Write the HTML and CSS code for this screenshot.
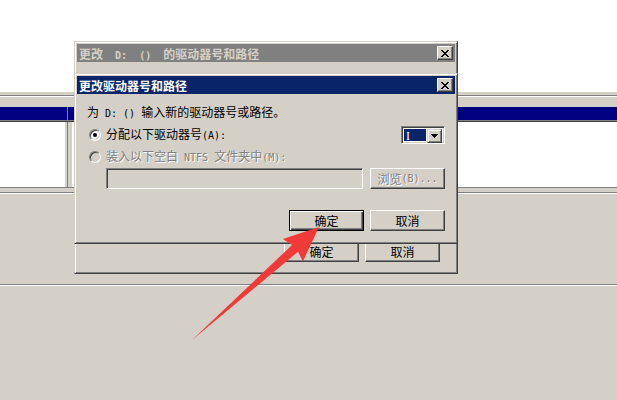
FILE: index.html
```html
<!DOCTYPE html>
<html lang="zh-CN">
<head>
    <meta charset="UTF-8">
    <meta name="viewport" content="width=device-width, initial-scale=1.0">
    <title>更改驱动器号和路径</title>
    <link rel="stylesheet" href="styles.css">
</head>
<body>

    <div class="screen">
        <!-- console window behind the dialogs -->
        <div class="blank"></div>
        <div class="console">
            <div class="toolbar"><div class="toolbar-rule"></div></div>
            <div class="column-head">
                <div class="head-left"></div>
                <div class="head-split"></div>
                <div class="head-right"></div>
            </div>
            <div class="panes">
                <div class="pane pane-left"></div>
                <div class="splitter"></div>
                <div class="pane pane-right"></div>
            </div>
            <div class="pane-foot"></div>
        </div>
        <div class="status-area"></div>
        <div class="status-bar"></div>

        <!-- first dialog (inactive) -->
        <div class="window win-back">
            <div class="titlebar inactive">
                <span class="title">更改<span class="hw">  D:  ()  </span>的驱动器号和路径</span>
                <span class="close-btn">
                    <svg width="8" height="7" viewBox="0 0 8 7"><path d="M0 0h2v1H0zM6 0h2v1H6zM1 1h2v1H1zM5 1h2v1H5zM2 2h4v1H2zM3 3h2v1H3zM2 4h4v1H2zM1 5h2v1H1zM5 5h2v1H5zM0 6h2v1H0zM6 6h2v1H6z" fill="#000" shape-rendering="crispEdges"/></svg>
                </span>
            </div>
            <div class="client back-client">
                <div class="actions back-actions">
                    <button class="btn">确定</button>
                    <button class="btn">取消</button>
                </div>
            </div>
        </div>

        <!-- second dialog (active) -->
        <div class="window win-front">
            <div class="titlebar">
                <span class="title">更改驱动器号和路径</span>
                <span class="close-btn">
                    <svg width="8" height="7" viewBox="0 0 8 7"><path d="M0 0h2v1H0zM6 0h2v1H6zM1 1h2v1H1zM5 1h2v1H5zM2 2h4v1H2zM3 3h2v1H3zM2 4h4v1H2zM1 5h2v1H1zM5 5h2v1H5zM0 6h2v1H0zM6 6h2v1H6z" fill="#000" shape-rendering="crispEdges"/></svg>
                </span>
            </div>
            <div class="client front-client">
                <div class="prompt">为<span class="hw"> D: () </span>输入新的驱动器号或路径。</div>

                <div class="option">
                    <span class="radio checked"></span>
                    <span class="option-label">分配以下驱动器号<span class="hw">(A):</span></span>
                    <div class="combo">
                        <span class="combo-value">I</span>
                        <span class="combo-btn">
                            <svg width="7" height="4" viewBox="0 0 7 4"><path d="M0 0h7v1H0zM1 1h5v1H1zM2 2h3v1H2zM3 3h1v1H3z" fill="#000" shape-rendering="crispEdges"/></svg>
                        </span>
                    </div>
                </div>

                <div class="option option-mount">
                    <span class="radio disabled"></span>
                    <span class="option-label disabled-text">装入以下空白<span class="hw"> NTFS </span>文件夹中<span class="hw">(M):</span></span>
                </div>

                <div class="path-row">
                    <div class="path-input"></div>
                    <button class="btn disabled-text">浏览<span class="hw">(B)...</span></button>
                </div>

                <div class="actions">
                    <button class="btn default">确定</button>
                    <button class="btn">取消</button>
                </div>
            </div>
        </div>

        <!-- red callout arrow -->
        <svg class="callout" width="617" height="400" viewBox="0 0 617 400">
            <polygon points="319,227 302.9,261.5 298.1,251.7 192,340 292.1,244.9 282.9,239.1" fill="#f03a3a"/>
        </svg>
    </div>

</body>
</html>
```

FILE: styles.css
```css
body {
    margin: 0;
    font-family: "Noto Sans CJK SC", "Noto Sans", sans-serif;
    font-size: 12px;
    color: #000;
    background-color: #d4d0c8;
}

.screen {
    position: relative;
    width: 617px;
    height: 400px;
    overflow: hidden;
    display: flex;
    flex-direction: column;
}

/* half-width latin runs, 6px per character like the bitmap UI font */
.hw {
    font-family: "DejaVu Sans Mono", monospace;
    font-size: 10px;
    white-space: pre;
}

/* --- background console --- */
.blank {
    height: 91px;
    background-color: #fff;
}

.toolbar {
    height: 15px;
    border-top: 1px solid #fff;
    background-color: #d4d0c8;
}

.toolbar-rule {
    margin-top: 3px;
    border-top: 1px solid #808080;
    border-bottom: 1px solid #fff;
}

.column-head {
    display: flex;
    height: 13px;
    background-color: #000080;
    border-bottom: 1px solid #808080;
    box-shadow: 0 1px 0 #404040;
}

.head-left {
    width: 67px;
}

.head-split {
    width: 1px;
    background-color: #808080;
}

.head-right {
    flex-grow: 1;
}

.panes {
    display: flex;
    height: 65px;
    margin-top: 1px;
}

.pane {
    background-color: #fff;
}

.pane-left {
    width: 65px;
}

.splitter {
    width: 6px;
    border-left: 2px solid #d4d0c8;
    box-shadow: inset 1px 0 #808080, inset -1px 0 #fff;
    background-color: #d4d0c8;
}

.pane-right {
    flex-grow: 1;
}

.pane-foot {
    height: 4px;
    border-top: 1px solid #808080;
    border-bottom: 1px solid #808080;
    box-shadow: 0 1px 0 #fff;
}

.status-area {
    height: 91px;
}

.status-bar {
    flex-grow: 1;
    border-top: 1px solid #808080;
    box-shadow: inset 0 1px 0 #fff;
}

/* --- dialog windows --- */
.window {
    position: absolute;
    box-sizing: border-box;
    display: flex;
    flex-direction: column;
    padding: 2px;
    background-color: #d4d0c8;
    border: 1px solid;
    border-color: #d4d0c8 #404040 #404040 #d4d0c8;
    box-shadow: inset 1px 1px #fff, inset -1px -1px #808080;
}

.win-back {
    left: 74px;
    top: 41px;
    width: 384px;
    height: 233px;
}

.win-front {
    left: 74px;
    top: 73px;
    width: 384px;
    height: 171px;
}

.titlebar {
    display: flex;
    align-items: center;
    height: 18px;
    padding: 0 2px 0 2px;
    background-color: #0a246a;
    color: #fff;
    font-weight: bold;
    white-space: nowrap;
}

.titlebar.inactive {
    background-color: #808080;
    color: #d4d0c8;
}

.titlebar .hw {
    font-weight: bold;
}

.close-btn {
    margin-left: auto;
    box-sizing: border-box;
    width: 16px;
    height: 14px;
    display: flex;
    align-items: center;
    justify-content: center;
    background-color: #d4d0c8;
    border: 1px solid;
    border-color: #fff #404040 #404040 #fff;
    box-shadow: inset -1px -1px #808080;
}

.client {
    flex-grow: 1;
    display: flex;
    flex-direction: column;
}

.back-client {
    justify-content: flex-end;
    padding: 0 15px 9px 0;
}

.back-actions {
    gap: 12px;
}

.front-client {
    padding: 12px 10px 0 10px;
}

.prompt {
    line-height: 12px;
    white-space: nowrap;
}

.option {
    display: flex;
    align-items: center;
    height: 18px;
    margin-top: 6px;
    padding-left: 2px;
    white-space: nowrap;
}

.option-mount {
    height: 14px;
}

.option-label {
    margin-left: 5px;
    line-height: 12px;
}

.disabled-text,
.btn.disabled-text {
    color: #808080;
    text-shadow: 1px 1px 0 #fff;
}

.radio {
    box-sizing: border-box;
    width: 12px;
    height: 12px;
    border-radius: 50%;
    border: 1px solid;
    border-color: #808080 #fff #fff #808080;
    box-shadow: inset 1px 1px #404040, inset -1px -1px #d4d0c8;
    background-color: #fff;
    display: flex;
    align-items: center;
    justify-content: center;
}

.radio.checked::after {
    content: "";
    width: 4px;
    height: 4px;
    border-radius: 50%;
    background-color: #000;
}

.radio.disabled {
    background-color: #d4d0c8;
}

.combo {
    margin-left: auto;
    box-sizing: border-box;
    width: 44px;
    height: 18px;
    padding: 2px;
    display: flex;
    gap: 1px;
    background-color: #fff;
    border: 1px solid;
    border-color: #808080 #fff #fff #808080;
    box-shadow: inset 1px 1px #404040, inset -1px -1px #d4d0c8;
}

.combo-value {
    width: 23px;
    padding-left: 2px;
    box-sizing: border-box;
    background-color: #0a246a;
    color: #fff;
    font-family: "Liberation Serif", serif;
    line-height: 14px;
}

.combo-btn {
    box-sizing: border-box;
    width: 16px;
    height: 14px;
    display: flex;
    align-items: center;
    justify-content: center;
    background-color: #d4d0c8;
    border: 1px solid;
    border-color: #d4d0c8 #404040 #404040 #d4d0c8;
    box-shadow: inset 1px 1px #fff, inset -1px -1px #808080;
}

.path-row {
    display: flex;
    gap: 7px;
    height: 21px;
    margin-top: 4px;
    margin-left: 19px;
}

.path-input {
    flex-grow: 1;
    box-sizing: border-box;
    border: 1px solid;
    border-color: #808080 #fff #fff #808080;
    box-shadow: inset 1px 1px #404040, inset -1px -1px #d4d0c8;
    background-color: #d4d0c8;
}

.actions {
    display: flex;
    justify-content: flex-end;
    gap: 6px;
    margin-top: 21px;
}

.btn {
    box-sizing: border-box;
    width: 75px;
    height: 21px;
    padding: 0;
    font: inherit;
    color: #000;
    line-height: 12px;
    background-color: #d4d0c8;
    border: 1px solid;
    border-color: #fff #404040 #404040 #fff;
    box-shadow: inset -1px -1px #808080;
    display: flex;
    align-items: center;
    justify-content: center;
}

.btn.default {
    border-color: #000;
    box-shadow: inset 1px 1px #fff, inset -1px -1px #404040, inset -2px -2px #808080;
}

.callout {
    position: absolute;
    left: 0;
    top: 0;
    pointer-events: none;
}
```
